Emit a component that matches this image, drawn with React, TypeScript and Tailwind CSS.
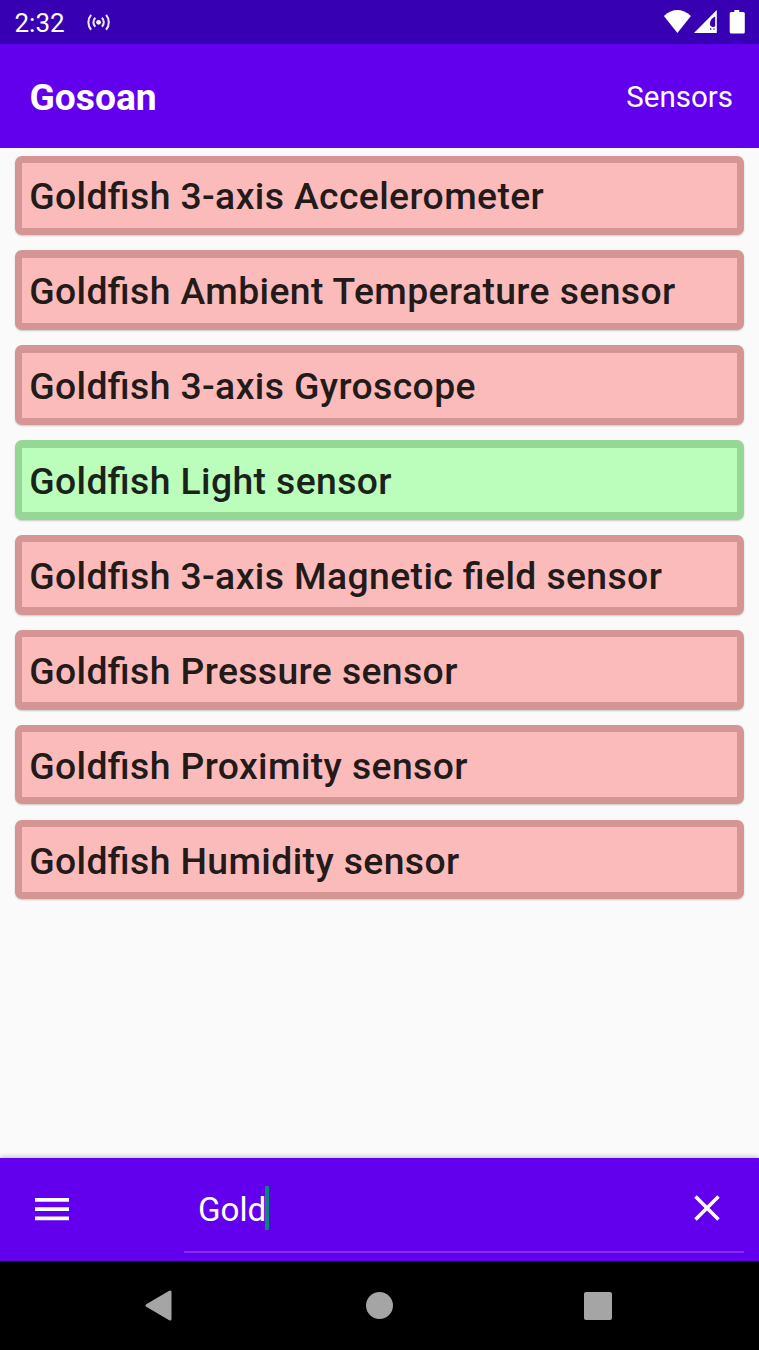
const sensors = [
  { name: "Goldfish 3-axis Accelerometer", active: false },
  { name: "Goldfish Ambient Temperature sensor", active: false },
  { name: "Goldfish 3-axis Gyroscope", active: false },
  { name: "Goldfish Light sensor", active: true },
  { name: "Goldfish 3-axis Magnetic field sensor", active: false },
  { name: "Goldfish Pressure sensor", active: false },
  { name: "Goldfish Proximity sensor", active: false },
  { name: "Goldfish Humidity sensor", active: false },
];

function StatusBar() {
  return (
    <div className="flex h-[44px] shrink-0 items-center bg-[#3700b3] pl-[14.5px] pr-[14px] text-white">
      <span className="w-[71px] pt-[1px] text-[26px] leading-[30px]">2:32</span>
      <svg className="h-[20px] w-[26px]" viewBox="0 0 26 20" fill="none" stroke="#ebe5f7" strokeWidth="2.1">
        <circle cx="12.6" cy="10.3" r="2.4" fill="#fff" stroke="none" />
        <path d="M9.3 5.8a6.3 6.3 0 0 0 0 9M15.9 5.8a6.3 6.3 0 0 1 0 9M5.1 2.9a11.5 11.5 0 0 0 0 14.8M20.1 2.9a11.5 11.5 0 0 1 0 14.8" />
      </svg>
      <svg className="ml-auto h-[26px] w-[82px]" viewBox="0 0 82 26" fill="#fff">
        <path d="M.9 7Q14.4-4.800 27.900 7L14.400 23.900Z" />
        <path fillRule="evenodd" d="M31 23.900 53.800 1.100V23.900ZM52.200 7.400Q47.300 9.500 46.900 14.500Q47 18.600 51.500 17.800L52.200 17ZM47 19.200h1.300v1.500H47ZM50.200 19.400h1.600v1h-1.600Z" />
        <path d="M71.300 1h5v2.100h4q1.500 0 1.500 1.500v18.500q0 1.500-1.500 1.500h-12.100q-1.500 0-1.500-1.500V4.600q0-1.500 1.500-1.500h3.100Z" />
      </svg>
    </div>
  );
}

function SensorCard({ name, active }: { name: string; active: boolean }) {
  return (
    <li
      className={`flex h-[79.5px] shrink-0 items-center rounded-[7px] p-[7.300px] shadow-[0_1px_2px_rgba(0,0,0,0.2)] ${
        active ? "bg-[#96d696]" : "bg-[#d69595]"
      }`}
    >
      <div
        className={`flex h-full w-full items-center whitespace-nowrap pl-[7.200px] pt-[2px] text-[37.300px] font-medium leading-[44px] tracking-[0.400px] ${
          active ? "bg-[#bbfdbb] text-[#1a231a]" : "bg-[#fcbbbb] text-[#231a1a]"
        }`}
      >
        <span className="[font-feature-settings:'liga'_1]">{name}</span>
      </div>
    </li>
  );
}

export default function App() {
  return (
    <div className="flex h-[1350px] w-[759px] flex-col overflow-hidden bg-[#fafafa] font-[Roboto,sans-serif]">
      <StatusBar />
      <header className="flex h-[103.500px] shrink-0 items-center justify-between bg-[#6200ee] pl-[29.500px] pr-[26px] pt-[4px] text-white">
        <h1 className="mb-[2px] text-[37.200px] font-bold leading-[44px]">Gosoan</h1>
        <span className="mb-[1px] text-[29.500px] leading-[36px]">Sensors</span>
      </header>
      <ul className="flex flex-1 flex-col gap-[15.400px] px-[14.700px] pt-[8.100px]">
        {sensors.map((sensor) => (
          <SensorCard key={sensor.name} {...sensor} />
        ))}
      </ul>
      <footer className="flex h-[103.500px] shrink-0 bg-[#6200ee] pl-[35px] pr-[15px] text-white shadow-[0_-1px_5px_rgba(0,0,0,0.25)]">
        <svg className="mt-[40.700px] h-[23px] w-[34px]" viewBox="0 0 34 23" fill="#fff">
          <path d="M0 0h34v3.700H0ZM0 9.300h34V13H0ZM0 18.500h34v3.700H0Z" />
        </svg>
        <div className="ml-[114.500px] mb-[7.800px] flex flex-1 items-center border-b-2 border-[#7e2df1] pl-[14.500px] pr-[24px] pt-[10px]">
          <span className="pt-[2px] text-[33.200px] leading-[40px]">Gold</span>
          <span className="mb-[2px] -ml-px h-[44px] w-[3.500px] bg-[#098879]" />
          <svg className="ml-auto mb-[2px] h-[26px] w-[26px]" viewBox="0 0 26 26" stroke="#fff" strokeWidth="3.500">
            <path d="M1.500 1.500 24.500 24.500M24.500 1.500 1.500 24.500" />
          </svg>
        </div>
      </footer>
      <nav className="flex h-[89px] shrink-0 items-center justify-between bg-black pl-[145px] pr-[147px]">
        <svg className="h-[31px] w-[27px]" viewBox="0 0 27 31" fill="#a5a5a5" stroke="#a5a5a5" strokeWidth="3" strokeLinejoin="round">
          <path d="M2 15.500 25 2v27Z" />
        </svg>
        <div className="ml-[2px] h-[27px] w-[27px] rounded-full bg-[#a5a5a5]" />
        <div className="h-[28px] w-[28px] rounded-[2px] bg-[#a5a5a5]" />
      </nav>
    </div>
  );
}
